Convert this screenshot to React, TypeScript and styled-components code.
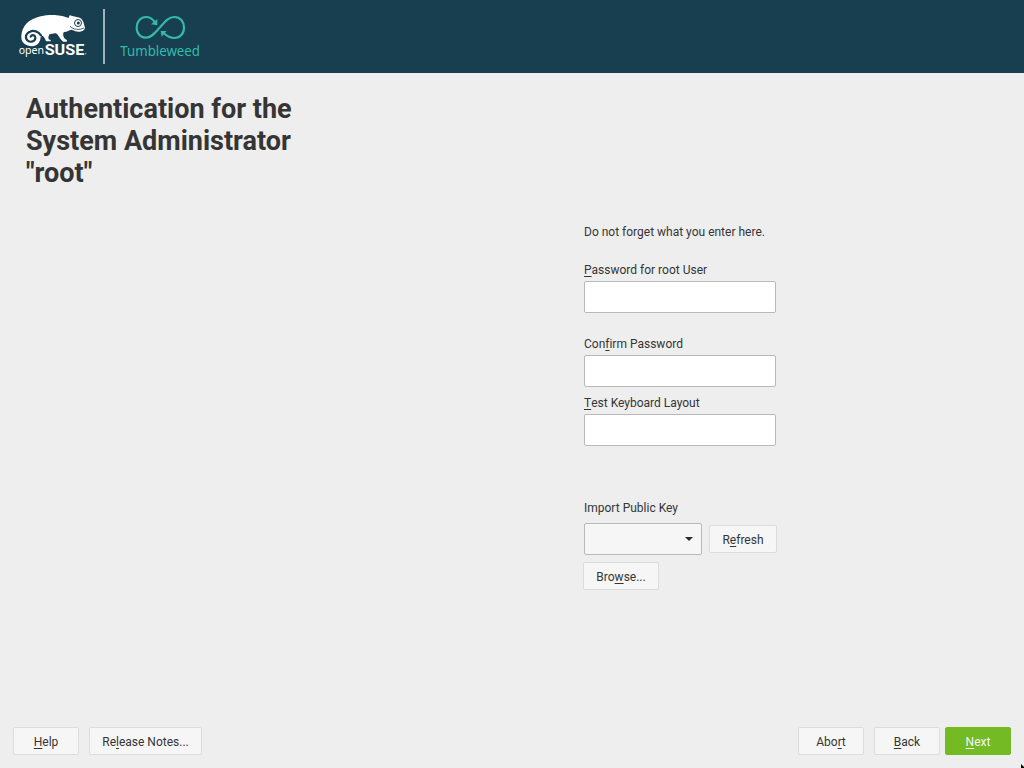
import React from "react";
import styled, { createGlobalStyle } from "styled-components";

const GlobalStyle = createGlobalStyle`
  * { box-sizing: border-box; }
  body { margin: 0; background: #eeeeee; overflow: hidden; }
`;

const Screen = styled.div`
  position: relative;
  width: 1024px;
  height: 768px;
  display: flex;
  flex-direction: column;
  overflow: hidden;
  background: #eeeeee;
  color: #353535;
  font: 12px/14px Roboto, "Liberation Sans", sans-serif;
`;

const Header = styled.header`
  flex: none;
  display: flex;
  height: 73px;
  padding: 8px 0 0 14px;
  background: #173f4f;
`;

const BrandLogo = styled.svg`
  display: block;
  flex: none;
`;

const Divider = styled.div`
  width: 2px;
  height: 55px;
  margin: 1px 14px 0 9px;
  background: #a3b2b9;
`;

const Main = styled.main`
  flex: 1;
  display: flex;
  padding: 20px 0 0 26px;
`;

const Title = styled.h1`
  width: 300px;
  margin: 0;
  font-size: 27px;
  line-height: 32px;
  font-weight: 700;
`;

const Form = styled.form`
  display: flex;
  flex-direction: column;
  width: 194px;
  margin: 132px 0 0 258px;
`;

const Note = styled.p`
  margin: 0 0 24px;
`;

const Field = styled.label<{ $gap: number }>`
  display: flex;
  flex-direction: column;
  gap: 4px;
  width: 192px;
  margin-bottom: ${(p) => p.$gap}px;
`;

const Input = styled.input`
  width: 192px;
  height: 32px;
  padding: 0 8px;
  border: 1px solid #b9b9b9;
  border-radius: 2px;
  background: #fff;
  outline: none;
`;

const KeyRow = styled.div`
  display: flex;
  align-items: center;
  gap: 7px;
  margin: 8px 0 7px;
`;

const Combo = styled.div`
  display: flex;
  align-items: center;
  justify-content: flex-end;
  width: 118px;
  height: 32px;
  padding-right: 8px;
  border: 1px solid #b9b9b9;
  border-radius: 2px;
  background: #f6f6f6;
`;

const Button = styled.button<{ $width: number; $primary?: boolean }>`
  flex: none;
  width: ${(p) => p.$width}px;
  height: 28px;
  padding: 1px 0 0;
  border: 1px solid ${(p) => (p.$primary ? "#73ba25" : "#dcdcdc")};
  border-radius: 2px;
  background: ${(p) => (p.$primary ? "#73ba25" : "#f6f6f6")};
  color: ${(p) => (p.$primary ? "#f6f6f6" : "#353535")};
  font: inherit;
`;

const BrowseButton = styled(Button)`
  margin-left: -1px;
`;

const Mnemonic = styled.span`
  font-variant-ligatures: none;
  text-decoration: underline;
  text-decoration-thickness: 1px;
  text-underline-offset: 2px;
  text-decoration-skip-ink: none;
`;

const Footer = styled.footer`
  flex: none;
  display: flex;
  justify-content: space-between;
  padding: 0 13px 13px;
`;

const ButtonGroup = styled.div<{ $gap: number }>`
  display: flex;
  gap: ${(p) => p.$gap}px;
`;

const Pointer = styled.svg`
  position: absolute;
  left: 1020px;
  top: 763px;
`;

function Label({ text, at }: { text: string; at: number }) {
  return (
    <span>
      {text.slice(0, at)}
      <Mnemonic>{text[at]}</Mnemonic>
      {text.slice(at + 1)}
    </span>
  );
}

function ChameleonLogo() {
  return (
    <BrandLogo width="80" height="54" viewBox="12 24 240 162">
      <path
        fill="#fff"
        d="M34 112C34 91 43 73 62 61C82 48 108 44 134 45C151 46 164 50 176 54C178 50 177 47 180 46C186 48 192 50 200 51C210 52 218 58 220 66L225 83C224 90 218 94 209 95C198 96 192 90 184 89C177 90 172 95 162 96C158 99 159 108 163 115L171 121L170 125H160C150 118 147 106 140 101C132 98 125 103 119 103C116 107 114 113 116 118L122 120V124H108C105 116 103 110 98 108C95 108 93 109 92 112C91 127 81 139 66 139C48 139 34 128 34 112Z"
      />
      <path
        fill="none"
        stroke="#173f4f"
        strokeWidth="6.5"
        strokeLinecap="round"
        d="M93 106C85 94 71 90 60 95C47 100 44 114 53 122C63 129 77 123 76 112C75 104 65 103 62 110"
      />
      <circle cx="204" cy="69" r="10.5" fill="#fff" stroke="#173f4f" strokeWidth="3" />
      <circle cx="205" cy="69" r="4.5" fill="#173f4f" />
      <path fill="none" stroke="#173f4f" strokeWidth="2.5" d="M180 79C190 89 207 91 222 84" />
      <text x="26" y="163" fill="#fff" fontFamily="Noto Sans, sans-serif" fontSize="34" textLength="76" lengthAdjust="spacingAndGlyphs">open</text>
      <text x="104" y="164" fill="#fff" fontFamily="Roboto, sans-serif" fontWeight="700" fontSize="42" textLength="119" lengthAdjust="spacingAndGlyphs">SUSE</text>
      <circle cx="227" cy="161" r="2" fill="#b5c2c8" />
    </BrandLogo>
  );
}

function TumbleweedLogo() {
  return (
    <BrandLogo width="86" height="54" viewBox="57 24 258 162">
      <g fill="none" stroke="#35b9ab" strokeWidth="6.5">
        <path d="M165 67C157 55 147 51 138 51C122 51 110 65 110 83C110 101 122 113 138 113C156 113 166 97 180 82C194 66 205 51 223 51C241 51 252 65 252 83C252 101 240 114 223 114C209 114 200 108 192 100" />
      </g>
      <path fill="#35b9ab" d="M172 57V76L153 73ZM182 93H200L185 110Z" />
      <text x="61" y="167" fill="#35b9ab" fontFamily="Noto Sans, sans-serif" fontSize="43" textLength="239" lengthAdjust="spacingAndGlyphs">Tumbleweed</text>
    </BrandLogo>
  );
}

export default function App() {
  return (
    <Screen>
      <GlobalStyle />
      <Header>
        <ChameleonLogo />
        <Divider />
        <TumbleweedLogo />
      </Header>
      <Main>
        <Title>
          Authentication for the System Administrator "root"
        </Title>
        <Form>
          <Note>Do not forget what you enter here.</Note>
          <Field $gap={24}>
            <Label text="Password for root User" at={0} />
            <Input type="password" />
          </Field>
          <Field $gap={9}>
            <Label text="Confirm Password" at={3} />
            <Input type="password" />
          </Field>
          <Field $gap={55}>
            <Label text="Test Keyboard Layout" at={0} />
            <Input type="text" />
          </Field>
          <span>Import Public Key</span>
          <KeyRow>
            <Combo>
              <svg width="8" height="4" viewBox="0 0 8 4">
                <path d="M0 0H8L4 4Z" fill="#2b2b2b" />
              </svg>
            </Combo>
            <Button type="button" $width={68}>
              <Label text="Refresh" at={1} />
            </Button>
          </KeyRow>
          <BrowseButton type="button" $width={76}>
            <Label text="Browse..." at={3} />
          </BrowseButton>
        </Form>
      </Main>
      <Footer>
        <ButtonGroup $gap={10}>
          <Button type="button" $width={66}>
            <Label text="Help" at={0} />
          </Button>
          <Button type="button" $width={113}>
            <Label text="Release Notes..." at={2} />
          </Button>
        </ButtonGroup>
        <ButtonGroup $gap={5}>
          <ButtonGroup $gap={10}>
            <Button type="button" $width={66}>
              <Label text="Abort" at={3} />
            </Button>
            <Button type="button" $width={66}>
              <Label text="Back" at={0} />
            </Button>
          </ButtonGroup>
          <Button type="button" $width={66} $primary>
            <Label text="Next" at={0} />
          </Button>
        </ButtonGroup>
      </Footer>
      <Pointer width="4" height="5" viewBox="0 0 4 5">
        <path d="M1 1L4 4V5H1Z" fill="#000" />
      </Pointer>
    </Screen>
  );
}
